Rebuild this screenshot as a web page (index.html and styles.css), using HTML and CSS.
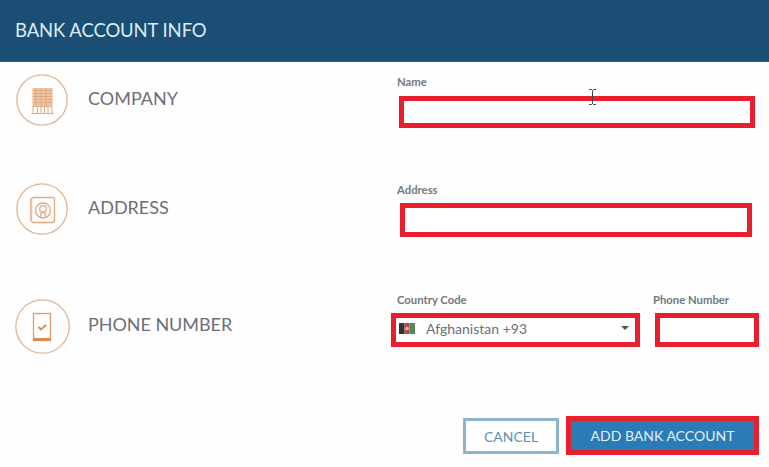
FILE: index.html
```html
<!DOCTYPE html>
<html lang="en">
<head>
    <meta charset="UTF-8">
    <meta name="viewport" content="width=device-width, initial-scale=1.0">
    <title>Bank Account Info</title>
    <link rel="stylesheet" href="styles.css">
</head>
<body>
    <div class="header">
        <h1>BANK ACCOUNT INFO</h1>
    </div>

    <div class="form-body">
        <div class="form-row row-company">
            <div class="section">
                <div class="section-icon">
                    <svg width="52" height="52" viewBox="0 0 52 52" fill="none" stroke="#e3ab83">
                        <circle cx="26" cy="26" r="25.2" stroke="#dfb695" stroke-width="1.3"/>
                        <rect x="16.500" y="14" width="20" height="18" fill="#eec3a2" stroke="none"/>
                        <path d="M16.500 16.500h20M16.500 19.500h20M16.500 22.500h20M16.500 25.500h20M16.500 28.500h20M20 14v18M25 14v18M30 14v18" stroke="#e0a478" stroke-width=".8"/>
                        <path d="M15.500 39.500h22.500M17 32v7.500M36 32v7.500M21.500 33v6.500M25 33v6.500M28.500 33v6.500M32 33v6.500M16.500 32.500h20" stroke-width="1.100"/>
                    </svg>
                </div>
                <span class="section-title">COMPANY</span>
            </div>
            <div class="field">
                <label>Name</label>
                <input class="box name-box" type="text">
                <svg class="text-cursor" width="9" height="16" viewBox="0 0 9 16" fill="none" stroke="#444">
                    <path d="M1 .5h2.500L4.500 1.500 5.500.5H8M4.500 1.500v13M1 15.500h2.500l1-1 1 1H8"/>
                </svg>
            </div>
        </div>

        <div class="form-row row-address">
            <div class="section">
                <div class="section-icon">
                    <svg width="52" height="52" viewBox="0 0 52 52" fill="none" stroke="#e0aa84" stroke-width="1.300">
                        <circle cx="26" cy="26" r="25.2" stroke="#dfb695"/>
                        <rect x="15.500" y="14.500" width="23" height="25" rx="2"/>
                        <path d="M15 16v22" stroke-width="2.200" stroke="#e9bd9b"/>
                        <circle cx="27" cy="27.500" r="7.500"/>
                        <circle cx="27" cy="26" r="3.300"/>
                        <path d="M24.500 34.500c0-3 .5-5.500 2.500-5.500s2.500 2.500 2.500 5.500"/>
                    </svg>
                </div>
                <span class="section-title">ADDRESS</span>
            </div>
            <div class="field">
                <label>Address</label>
                <input class="box address-box" type="text">
            </div>
        </div>

        <div class="form-row row-phone">
            <div class="section">
                <div class="section-icon icon-large">
                    <svg width="55" height="55" viewBox="0 0 55 55" fill="none" stroke="#e39a68">
                        <circle cx="27.500" cy="27.500" r="26.700" stroke="#dfb695" stroke-width="1.300"/>
                        <rect x="18.500" y="14.500" width="17" height="27" stroke-width="1.300"/>
                        <path d="M18 40.500h18" stroke="#e08a4e" stroke-width="3"/>
                        <path d="M23.500 28l2.500 2.500 5-4.500" stroke="#dc8a52" stroke-width="1.800"/>
                    </svg>
                </div>
                <span class="section-title">PHONE NUMBER</span>
            </div>
            <div class="phone-fields">
                <div class="field">
                    <label>Country Code</label>
                    <div class="box country-box">
                        <svg class="flag" width="16" height="11" viewBox="0 0 16 11">
                            <rect width="5.500" height="11" fill="#333"/>
                            <rect x="5.500" width="5" height="11" fill="#c0434a"/>
                            <rect x="10.500" width="5.500" height="11" fill="#4f8a58"/>
                            <circle cx="8" cy="5.500" r="1.800" fill="#d9c3a0"/>
                        </svg>
                        <span class="country-name">Afghanistan +93</span>
                        <span class="caret"></span>
                    </div>
                </div>
                <div class="field phone-field">
                    <label>Phone Number</label>
                    <input class="box phone-box" type="text">
                </div>
            </div>
        </div>
    </div>

    <div class="footer">
        <button type="button" class="btn-cancel">CANCEL</button>
        <button type="button" class="btn-add">ADD BANK ACCOUNT</button>
    </div>
</body>
</html>
```

FILE: styles.css
```css
* {
    box-sizing: border-box;
}
body {
    margin: 0;
    height: 467px;
    overflow: hidden;
    font-family: Lato, 'Open Sans', sans-serif;
    background-color: #fefefe;
    color: #6c6f78;
}
.header {
    height: 62px;
    padding: 0 15px;
    display: flex;
    align-items: center;
    background: #1a4e75;
    border-bottom: 1px solid #2f6280;
}
h1 {
    margin: 0 0 2px;
    font-size: 18.500px;
    font-weight: 400;
    letter-spacing: -.1px;
    color: #dcebf4;
}
.form-body {
    height: 342px;
    padding: 12px 0 0 16px;
}
.form-row {
    display: flex;
}
.row-company {
    height: 109px;
}
.row-address {
    height: 110px;
}
.row-phone {
    height: 100px;
}
.section {
    width: 381px;
    display: flex;
    align-items: flex-start;
    gap: 20px;
}
.section-icon {
    width: 52px;
    height: 52px;
    flex: none;
}
.icon-large {
    width: 55px;
    height: 55px;
    margin: 6px 0 0 -1px;
}
.section-title {
    font-size: 18px;
    line-height: 22px;
    margin-top: 13px;
}
.row-phone .section-title {
    margin: 20px 0 0 -2px;
    letter-spacing: -.05px;
}
.field {
    position: relative;
}
label {
    display: block;
    height: 14px;
    font-size: 11.300px;
    font-weight: 700;
    line-height: 14px;
    color: #75787f;
}
.row-company label {
    margin-top: 1px;
}
.box {
    display: block;
    border: 5px solid #e8202e;
    border-radius: 0;
    background: #fff;
    outline: none;
    padding: 0;
}
.name-box {
    width: 356px;
    height: 32px;
    margin: 7px 0 0 2px;
}
.address-box {
    width: 352px;
    height: 34px;
    margin: 6px 0 0 3px;
}
.text-cursor {
    position: absolute;
    left: 191px;
    top: 15px;
}
.phone-fields {
    display: flex;
}
.country-box {
    width: 249px;
    height: 34px;
    margin: 6px 0 0 -6px;
    display: flex;
    align-items: center;
    padding: 0 6px 4px 3px;
}
.flag {
    flex: none;
}
.country-name {
    margin-left: 11px;
    flex: 1;
    font-size: 14px;
}
.caret {
    width: 0;
    height: 0;
    border-left: 4.500px solid transparent;
    border-right: 4.500px solid transparent;
    border-top: 4.500px solid #555;
}
.phone-field {
    margin-left: 13px;
    width: 106px;
}
.phone-box {
    width: 104px;
    height: 34px;
    margin: 6px 0 0 2px;
}
.footer {
    height: 63px;
    display: flex;
    justify-content: flex-end;
    align-items: flex-start;
    padding: 11px 10px 0 0;
    border-top: 1px solid #fafafa;
}
button {
    font-family: inherit;
    font-size: 14px;
    cursor: pointer;
}
.btn-cancel {
    width: 96px;
    height: 36px;
    margin-top: 2px;
    background: #fff;
    color: #5b93b4;
    border: 3px solid #8db4cc;
}
.btn-add {
    width: 193px;
    height: 39px;
    margin-left: 7px;
    background: #2a7cb6;
    color: #e4f0f7;
    border: 5px solid #e8202e;
}
```
